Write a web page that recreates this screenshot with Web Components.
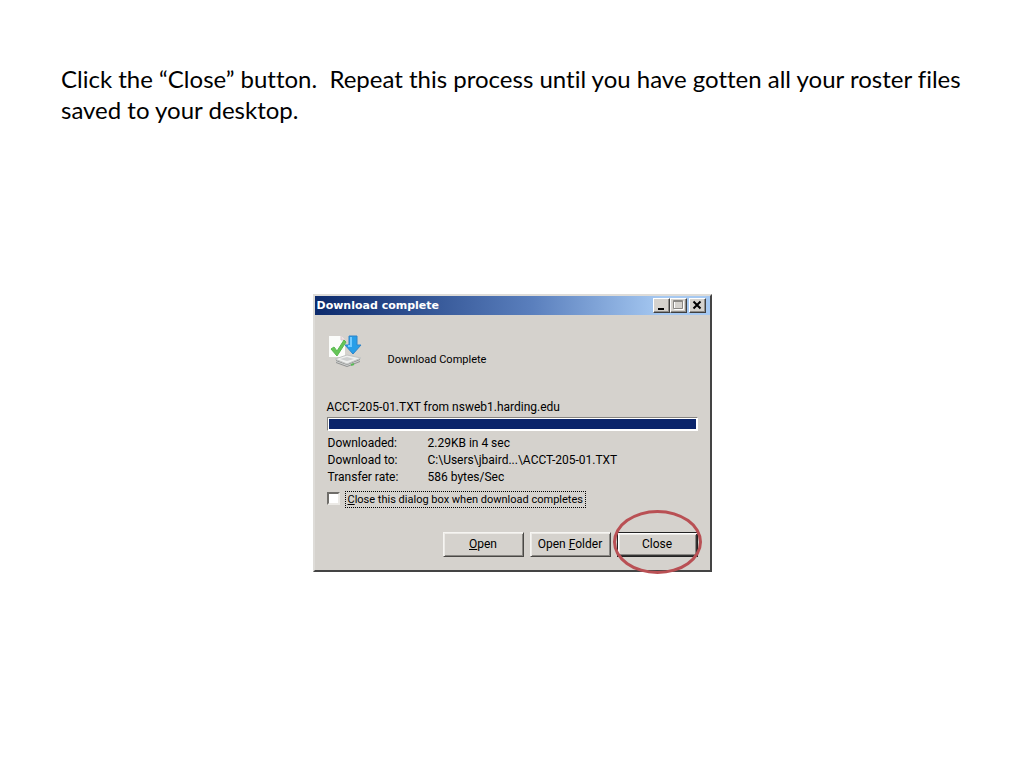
<!DOCTYPE html>
<html lang="en">
<head>
<meta charset="utf-8">
<title>Download complete</title>
<style>
  body { margin: 0; background: #fff; color: #000; font-family: Lato, "Liberation Sans", sans-serif; }
</style>
</head>
<body>
<slide-page>
  <span slot="heading">Click the “Close” button.&nbsp; Repeat this process until you have gotten all your roster files saved to your desktop.</span>
  <download-dialog></download-dialog>
</slide-page>

<template id="slide-page">
  <style>
    :host { display: flex; flex-direction: column; min-height: 100vh; box-sizing: border-box; padding: 63px 61px; }
    h1 { margin: 0 0 169px; font-size: 24px; line-height: 31px; font-weight: 400; font-variant-ligatures: none; }
    main { display: flex; justify-content: center; }
  </style>
  <h1><slot name="heading"></slot></h1>
  <main><slot></slot></main>
</template>

<template id="classic-button">
  <style>
    :host { display: block; position: relative; }
    button { display: block; box-sizing: border-box; width: 81px; height: 25px; padding: 0; font: inherit; color: #000; background: #d5d2cd; border: 1px solid; border-color: #f6f5f2 #4a4845 #4a4845 #f6f5f2; box-shadow: inset 1px 1px #eceae6, inset -1px -1px #8a8884; border-radius: 0; white-space: nowrap; }
    :host([default]) button { border-color: #222; box-shadow: inset 1px 1px #fff, inset -1px -1px #333, inset 2px 2px #eceae6, inset -2px -2px #8a8884; }
  </style>
  <button type="button"><slot></slot></button>
  <slot name="mark"></slot>
</template>

<template id="hand-ring">
  <style>
    :host { display: block; position: absolute; inset: -22px -4px -17px -4px; pointer-events: none; }
    div { box-sizing: border-box; height: 100%; border: 3px solid #b95054; border-radius: 50%; }
  </style>
  <div></div>
</template>

<template id="title-bar">
  <style>
    :host { display: flex; align-items: center; height: 19px; padding-right: 4px; background: linear-gradient(90deg, #0c2a6c, #5a7fbd 55%, #a6c9f2 88%); }
    h2 { flex: 1; margin: 0; padding-left: 2px; font: 700 11px/19px "DejaVu Sans", sans-serif; color: #fff; white-space: nowrap; }
    button { box-sizing: border-box; width: 17px; height: 15px; padding: 0; border: 1px solid; border-color: #fff #404040 #404040 #fff; box-shadow: inset -1px -1px #908e8a; background: #d5d2cd; border-radius: 0; }
    button:last-child { margin-left: 2px; }
    svg { display: block; width: 15px; height: 13px; }
  </style>
  <h2><slot></slot></h2>
  <button type="button" aria-label="Minimize"><svg viewBox="0 0 15 13"><path d="M4 9h6v2H4z"/></svg></button>
  <button type="button" aria-label="Maximize" disabled><svg viewBox="0 0 15 13" fill="none"><path d="M3.500 2.500h9v8h-9z" stroke="#fff"/><path d="M2.500 1.500h9v8h-9z" stroke="#8a8884"/><path d="M2 2.500h10" stroke="#8a8884"/></svg></button>
  <button type="button" aria-label="Close window"><svg viewBox="0 0 15 13"><path d="M3.500 2.500l7 7M10.500 2.500l-7 7" stroke="#000" stroke-width="2"/></svg></button>
</template>

<template id="download-icon">
  <style>:host { display: block; } svg { display: block; width: 33px; height: 33px; }</style>
  <svg viewBox="0 0 33 33" aria-hidden="true">
    <path d="M0 1h12l4 4v17H0z" fill="#fbfcfa"/>
    <path d="M12 1v4h4" fill="#eedfe2" stroke="#d6c8cc"/>
    <path d="M7 25l11 4 13-5v3L18 32 7 28z" fill="#8f9190"/>
    <path d="M6 24l12-4 14 3-14 6z" fill="#edeeed" stroke="#c2c4c3"/>
    <path d="M11 24l7-2 7 2-7 2z" fill="#cdcfcf"/>
    <path d="M7 26l11 4 13-5v1l-13 5-11-4z" fill="#d2d4d3"/>
    <path d="M22 30l3-1" stroke="#59b957" stroke-width="2"/>
    <path d="M2 14l3-2 3 4 7-11 2 2L8 21z" fill="#65c557" stroke="#58b84e"/>
    <path d="M20 1h8v9h4l-8 9-8-9h4z" fill="#289ee8" stroke="#2f84c8"/>
    <path d="M22 2v9h-3" fill="none" stroke="#72cbff" stroke-width="2"/>
  </svg>
</template>

<template id="download-dialog">
  <style>
    :host { display: block; box-sizing: border-box; width: 399px; max-width: 100%; border: 2px solid; border-color: #dedcd8 #444 #444 #dedcd8; background: #d5d2cd; font: 12px/17px Roboto, "Liberation Sans", sans-serif; }
    .body { padding: 20px 12px 13px; }
    .status { display: flex; align-items: flex-end; gap: 26px; margin-bottom: 31px; padding-left: 2px; font-size: 11px; }
    p { margin: 0; }
    .track { box-sizing: border-box; height: 14px; margin: 1px 0 4px; padding: 1px; border: 1px solid; border-color: #85837f #fff #fff #85837f; background: #fff; }
    .fill { height: 100%; background: #0a246a; }
    dl { display: grid; grid-template-columns: 100px 1fr; margin: 0 0 5px; padding-left: 1px; }
    dd { margin: 0; }
    .option { display: flex; align-items: flex-start; gap: 5px; margin-bottom: 24px; font-size: 11px; }
    input { appearance: none; box-sizing: border-box; width: 13px; height: 13px; margin: 1px 0 0; border: 2px solid; border-color: #6f6d69 #eceae6 #eceae6 #6f6d69; background: #fff; border-radius: 0; }
    label { box-sizing: border-box; height: 17px; padding: 0 2px; line-height: 15px; border: 1px dotted #000; white-space: nowrap; }
    .actions { display: flex; justify-content: flex-end; gap: 6px; }
  </style>
  <title-bar>Download complete</title-bar>
  <div class="body">
    <div class="status"><download-icon></download-icon><p>Download Complete</p></div>
    <p>ACCT-205-01.TXT from nsweb1.harding.edu</p>
    <div class="track" role="progressbar" aria-label="Download" aria-valuenow="100"><div class="fill"></div></div>
    <dl>
      <dt>Downloaded:</dt><dd>2.29KB in 4 sec</dd>
      <dt>Download to:</dt><dd>C:\Users\jbaird...\ACCT-205-01.TXT</dd>
      <dt>Transfer rate:</dt><dd>586 bytes/Sec</dd>
    </dl>
    <div class="option"><input type="checkbox" id="auto"><label for="auto"><u>C</u>lose this dialog box when download completes</label></div>
    <div class="actions">
      <classic-button><u>O</u>pen</classic-button>
      <classic-button>Open <u>F</u>older</classic-button>
      <classic-button default>Close<hand-ring slot="mark"></hand-ring></classic-button>
    </div>
  </div>
</template>

<script>
  const define = name => customElements.define(name, class extends HTMLElement {
    constructor() {
      super();
      this.attachShadow({ mode: "open" }).append(document.getElementById(name).content.cloneNode(true));
    }
  });
  ["slide-page", "classic-button", "hand-ring", "title-bar", "download-icon", "download-dialog"].forEach(define);
</script>
</body>
</html>
